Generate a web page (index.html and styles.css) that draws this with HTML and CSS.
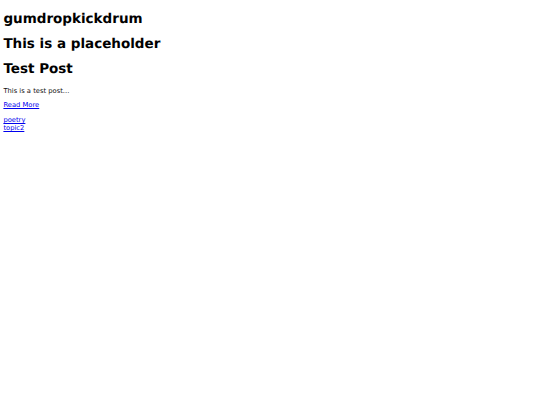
FILE: index.html
```html
<!DOCTYPE html>
<html lang="en">
<head>
    <meta charset="UTF-8">
    <meta name="viewport" content="width=device-width, initial-scale=1.0">
    <title>gumdropkickdrum</title>
    <link rel="stylesheet" href="styles.css">
</head>
<body>
    <header class="site-header">
        <h1 class="site-title">gumdropkickdrum</h1>
    </header>
    <main class="posts">
        <h1 class="page-title">This is a placeholder</h1>
        <article class="post">
            <h1 class="post-title">Test Post</h1>
            <p class="post-excerpt">This is a test post...</p>
            <p class="post-more"><a href="#">Read More</a></p>
            <div class="post-tags">
                <a href="#" class="tag">poetry</a>
                <a href="#" class="tag">topic2</a>
            </div>
        </article>
    </main>
</body>
</html>
```

FILE: styles.css
```css
body {
    font-family: "DejaVu Sans", sans-serif;
    font-size: 6.75px;
    margin: 2.4px 3.4px;
    color: #111;
    text-rendering: geometricPrecision;
}

h1 {
    font-size: 2em;
    font-weight: bold;
    margin: 0.67em 0;
    color: #000;
}

p {
    margin: 1em 0;
}

a {
    color: #0000ee;
}

/* tags stack one per line */
.post-tags .tag {
    display: block;
}
```
